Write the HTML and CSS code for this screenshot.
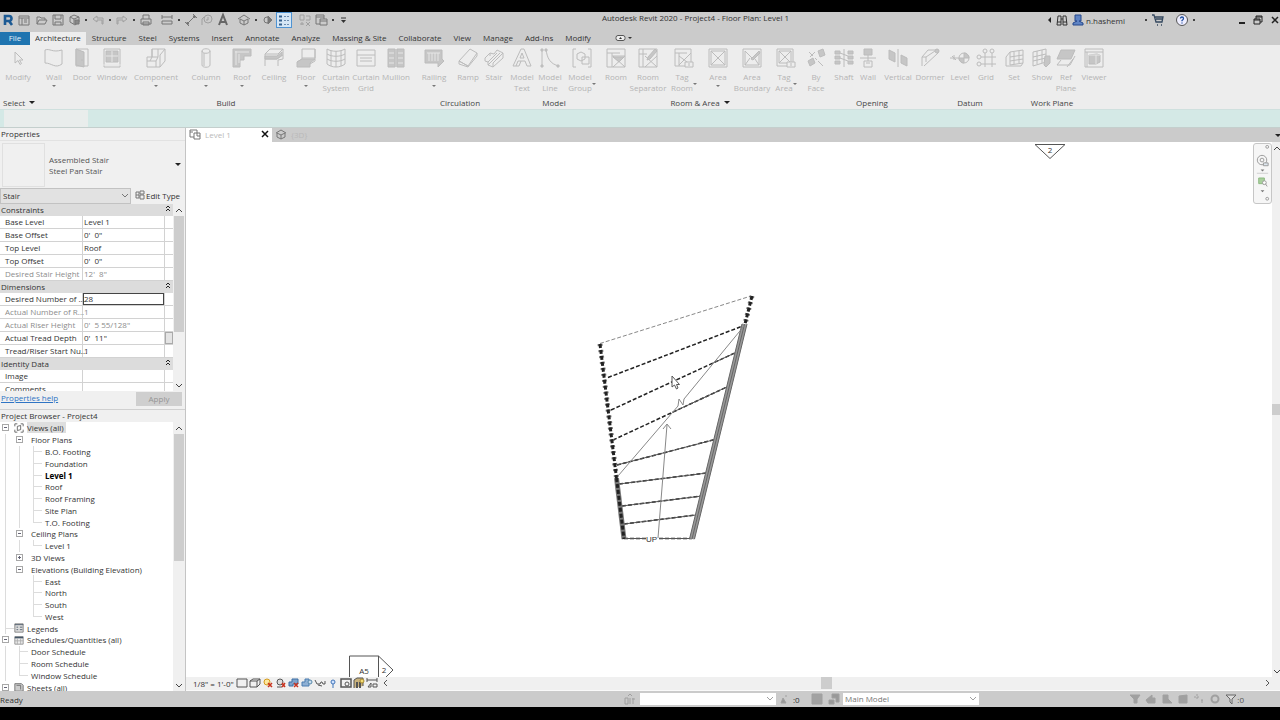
FILE: index.html
```html
<!DOCTYPE html>
<html lang="en">

<head>
  <meta charset="utf-8" />
  <title>Autodesk Revit 2020 - Project4 - Floor Plan: Level 1</title>
  <link rel="stylesheet" href="styles.css">
</head>

<body>
  <header class="titlebar">
    <div class="qat">
      <button class="tool" aria-label="Revit"><svg viewBox="0 0 16 16"><path d="M5 13V4h4a2.400 2.400 0 0 1 0 5H5m4 0 3 4" fill="none" stroke="#1c5a94" stroke-width="2.600"/></svg></button>
      <button class="tool" aria-label="Home"><svg viewBox="0 0 16 16"><path d="M3 4h10v9H3zM3 6h10M6 6v7M8 8h3M8 10h3"/></svg></button>
      <span class="gap-small"></span>
      <button class="tool" aria-label="Open"><svg viewBox="0 0 16 16"><path d="M3 12V5h3l1 1h4v2M3 12l2-4h8l-2 4z"/></svg></button>
      <button class="tool" aria-label="Save"><svg viewBox="0 0 16 16"><path d="M3 3h10v10H3zM5 3v4h6V3M5 13v-3h6v3"/></svg></button>
      <button class="tool" aria-label="Sync"><svg viewBox="0 0 16 16"><path d="M8 3l5 2v5l-4 3-5-3V5zM4 5l4 2 5-2M8 7v5"/><path d="M9 8h4v4H9z" fill="#888"/></svg></button>
      <button class="drop" aria-label="Sync options"></button>
      <button class="tool pale" aria-label="Undo"><svg viewBox="0 0 16 16"><path d="M7 4 3 7l4 3V8h5v4h1V6H7z"/></svg></button>
      <button class="drop" aria-label="Undo list"></button>
      <button class="tool pale" aria-label="Redo"><svg viewBox="0 0 16 16"><path d="M9 4l4 3-4 3V8H4v4H3V6h6z"/></svg></button>
      <button class="drop" aria-label="Redo list"></button>
      <button class="tool" aria-label="Print"><svg viewBox="0 0 16 16"><path d="M5 7V3h6v4M3 7h10v5H3zM5 10h6v3H5z"/></svg></button>
      <span class="gap-large"></span>
      <button class="tool" aria-label="Measure"><svg viewBox="0 0 16 16"><path d="M3 5h10M3 3v4M13 3v4M3 9h10v3H3z"/></svg></button>
      <button class="drop" aria-label="Measure options"></button>
      <button class="tool" aria-label="Aligned dimension"><svg viewBox="0 0 16 16"><path d="M4 12l8-8M2 10l4 4M10 2l4 4"/><path d="M4 10v2h2zM10 4h2v2z" fill="#666"/></svg></button>
      <button class="tool pale" aria-label="Tag"><svg viewBox="0 0 16 16"><path d="M3 13V7l2-2"/><circle cx="9" cy="7" r="4"/><path d="M9 5v3h-2"/></svg></button>
      <button class="tool" aria-label="Text"><svg viewBox="0 0 16 16"><path d="M4 13 8 3l4 10M5.500 10h5" fill="none" stroke="#666" stroke-width="2"/></svg></button>
      <span class="gap-large"></span>
      <button class="tool" aria-label="3D view"><svg viewBox="0 0 16 16"><path d="M2 7l6-4 6 4M4 7v4l4 2 4-2V7M4 7l4 2 4-2M8 9v4"/></svg></button>
      <button class="drop" aria-label="3D view options"></button>
      <button class="tool" aria-label="Section"><svg viewBox="0 0 16 16"><circle cx="7" cy="8" r="3"/><path d="M8 4l4 4-4 4z" fill="#777"/></svg></button>
      <button class="tool active" aria-label="Thin lines"><svg viewBox="0 0 16 16"><path d="M3 4.500h3M3 8.500h3M3 12.500h3" stroke="#345f8c" stroke-width="2"/><path d="M8 4.500h5M8 8.500h5M8 12.500h5" stroke="#6d8cae" stroke-dasharray="2 1"/></svg></button>
      <span class="gap-large"></span>
      <button class="tool pale" aria-label="Close hidden"><svg viewBox="0 0 16 16"><path d="M3 3h4v5H3zM9 4h4v4H9M5 10v3M9 10l4 4M13 10l-4 4M3 12h4"/></svg></button>
      <button class="tool" aria-label="Switch windows"><svg viewBox="0 0 16 16"><path d="M3 3h8v4M3 3v9h4M3 5h8M7 7h7v6H7zM7 9h7"/></svg></button>
      <button class="drop" aria-label="Window list"></button>
      <button class="customize" aria-label="Customize toolbar"><svg viewBox="0 0 12 16"><path d="M4 6h5" stroke="#333"/><path d="M4 8h5l-2.500 3z" fill="#333" stroke="none"/></svg></button>
    </div>
    <h1>Autodesk Revit 2020 - Project4 - Floor Plan: Level 1</h1>
    <div class="info">
      <svg class="tool" viewBox="0 0 16 16"><path d="M13 5v6l-3-3z" fill="#222" stroke="none"/></svg>
      <button class="tool" aria-label="Search"><svg viewBox="0 0 16 16"><path d="M3 13l1-9h3v9zM9 13V4h3l1 9zM7 7h2M3 10h4M9 10h4" stroke="#333"/></svg></button>
      <button class="tool" aria-label="Account"><svg viewBox="0 0 16 16"><path d="M5 3h6v6H9l4 2v2H3v-2l4-2H5z" fill="#5f84c4" stroke="#27498c"/></svg></button>
      <span class="user">n.hashemi</span>
      <button class="drop" aria-label="Account menu"></button>
      <button class="tool" aria-label="App store"><svg viewBox="0 0 16 16"><path d="M2 3h2l2 7h6l1-5H5M6 7h7M7 13h1M11 13h1" stroke="#34485f" stroke-width="1.300"/></svg></button>
      <span class="gap-help"></span>
      <button class="tool" aria-label="Help"><svg viewBox="0 0 16 16"><circle cx="8" cy="8" r="5.500" fill="#eef" stroke="#555"/><path d="M6.500 6.500q0-1.500 1.500-1.500t1.500 1.500q0 1-1.500 2v.8M8 10.500v1" stroke="#1f4fa0" stroke-width="1.300"/></svg></button>
      <button class="drop" aria-label="Help menu"></button>
    </div>
    <div class="window-buttons">
      <button class="tool" aria-label="Minimize"><svg viewBox="0 0 16 16"><path d="M5 11h6" stroke="#222" stroke-width="2"/></svg></button>
      <button class="tool" aria-label="Restore"><svg viewBox="0 0 16 16"><path d="M4 7h6v5H4zM6 7V4h6v6h-2M4 8h6M6 5h6" stroke="#222"/></svg></button>
      <button class="tool" aria-label="Close"><svg viewBox="0 0 16 16"><path d="M6 5l6 6M12 5l-6 6" stroke="#222" stroke-width="1.500"/></svg></button>
    </div>
  </header>

  <nav class="tabs">
    <button class="file">File</button>
    <button class="selected">Architecture</button>
    <button>Structure</button>
    <button>Steel</button>
    <button>Systems</button>
    <button>Insert</button>
    <button>Annotate</button>
    <button>Analyze</button>
    <button>Massing &amp; Site</button>
    <button>Collaborate</button>
    <button>View</button>
    <button>Manage</button>
    <button>Add-Ins</button>
    <button>Modify</button>
    <button class="toggle" aria-label="Minimize ribbon"><svg viewBox="0 0 18 8"><rect x="1" y="1.500" width="9" height="5" rx="2" fill="#eee" stroke="#555"/><path d="M4 5l1.500-2L7 5zM13 3h4l-2 2z" fill="#333"/></svg></button>
  </nav>

  <section class="ribbon">
    <div class="group select-group">
      <div class="buttons">
        <button class="w36"><svg viewBox="0 0 20 20"><path d="M7 4v11l3-2.500 2 4 1.500-1-2-3.500H15z"/></svg><span class="label">Modify</span></button>
      </div>
      <span class="title">Select <i class="caret"></i></span>
    </div>
    <div class="group">
      <div class="buttons">
        <button class="w28"><svg viewBox="0 0 20 20"><path d="M1 2c5-2 7 3 17 0v14c-7 5-10-1-17-1z"/></svg><span class="label">Wall</span><i class="caret"></i></button>
        <button class="w28"><svg viewBox="0 0 20 20"><path d="M4 1h12v17H4z"/><path class="fill" d="M4 1l8 3v15l-8-2z"/><path d="M10 11v2"/></svg><span class="label">Door</span></button>
        <button class="w32"><svg viewBox="0 0 20 20"><path d="M2 1h16v18H2z"/><path class="fill" d="M4 3h12v11H4z"/><path d="M10 3v11M4 8h12M1 17h18" class="light"/></svg><span class="label">Window</span></button>
        <button class="w56"><svg viewBox="0 0 20 20"><path d="M6 1h13v12l-5 6H1V9h5zM6 1v8l-2 4M6 9h6V1M12 9l-2 4v6M19 1l-5 6v12M1 13h9"/></svg><span class="label">Component</span><i class="caret"></i></button>
        <button class="w44"><svg viewBox="0 0 20 20"><path d="M6 3c0-3 8-3 8 0v14c0 3-8 3-8 0zM6 3c0 3 8 3 8 0M8 5v13"/></svg><span class="label">Column</span><i class="caret"></i></button>
        <button class="w28"><svg viewBox="0 0 20 20"><path class="fill" d="M1 1h18v7h-7v4H8v7H1z"/><path class="light" d="M3 4h14M4 3v14M7 6v9"/></svg><span class="label">Roof</span><i class="caret"></i></button>
        <button class="w36"><svg viewBox="0 0 20 20"><path d="M1 6l5-5h13v10l-5 1v6M1 6v12M1 6h13l5-5M1 11h12l6-4"/><path class="fill" d="M1 8h12l5-4v3l-5 4H1z"/></svg><span class="label">Ceiling</span></button>
        <button class="w28"><svg viewBox="0 0 20 20"><path d="M6 1h13v12l-5 3M6 1v10l-5 3M19 1v9H6"/><path class="fill" d="M1 14l5-3h13l-5 4v4H1z"/></svg><span class="label">Floor</span><i class="caret"></i></button>
        <button class="w32"><svg viewBox="0 0 20 20"><path d="M1 1c5 3 13 3 18 0v15c-5 4-13 4-18 0zM5 2v16M10 3v16M15 2v16M1 6c5 3 13 3 18 0M1 11c5 3 13 3 18 0"/></svg><span class="label">Curtain<br>System</span></button>
        <button class="w28"><svg viewBox="0 0 20 20"><path d="M1 2h18v16H1zM1 7h18M4 10h12M4 13h12"/></svg><span class="label">Curtain<br>Grid</span></button>
        <button class="w32"><svg viewBox="0 0 20 20"><path class="fill" d="M2 1h7v18H2zM11 1h7v18h-7z"/><path class="light" d="M3 5h5M3 10h5M3 15h5M12 5h5M12 10h5M12 15h5"/><path d="M10 1v18"/></svg><span class="label">Mullion</span></button>
      </div>
      <span class="title">Build</span>
    </div>
    <div class="group">
      <div class="buttons">
        <button class="w44"><svg viewBox="0 0 20 20"><path class="fill" d="M1 2h17v9l2 2-6 6v-4H1z"/><path class="light" d="M3 5h13M5 5v8M8 5v8M11 5v8M14 5v8"/></svg><span class="label">Railing</span><i class="caret"></i></button>
        <button class="w24"><svg viewBox="0 0 20 20"><path d="M1 13L12 1l7 4-9 13zM1 13v3l9 3 9-11V5M10 18l-9-5"/></svg><span class="label">Ramp</span></button>
        <button class="w28"><svg viewBox="0 0 20 20"><path d="M1 10l5-5 4 1 3-4 6 3v5L9 19l-5-2M1 10v3l3 1 9-9M4 14v3l12-12M9 19v-4l10-10M6 5v3"/></svg><span class="label">Stair</span></button>
      </div>
      <span class="title">Circulation</span>
    </div>
    <div class="group">
      <div class="buttons">
        <button class="w28"><svg viewBox="0 0 20 20"><path d="M1 18L9 1h3l7 17h-4l-2-5H6l-2 5zM8 10h4l-2-5zM4 18h3l2-5"/></svg><span class="label">Model<br>Text</span></button>
        <button class="w28"><svg viewBox="0 0 20 20"><path d="M2 1v18M6 1c1 9 4 15 13 17"/><path class="fill" d="M1 1h2v2H1zM1 17h2v2H1zM5 1h2v2H5zM17 17h2v2h-2z"/></svg><span class="label">Model<br>Line</span></button>
        <button class="w36"><svg viewBox="0 0 20 20"><path d="M4 1H1v18h3M16 1h3v18h-3M5 6l4-2 4 2v5l-4 2-4-2zM10 9h7v7h-7z"/></svg><span class="label-row"><span class="label">Model<br>Group</span><i class="caret"></i></span></button>
      </div>
      <span class="title">Model</span>
    </div>
    <div class="group">
      <div class="buttons">
        <button class="w32"><svg viewBox="0 0 20 20"><path d="M1 1h18v18H1zM1 5h13M6 5v14M6 8h13M7 8l12 11M19 8L7 19"/><path class="fill" d="M7 9h11l-5 5z"/></svg><span class="label">Room</span></button>
        <button class="w32"><svg viewBox="0 0 20 20"><path d="M1 1h18v18H1zM5 1v18M7 8l12 11M19 8L7 19M1 6h8"/><path class="fill" d="M10 9l7-8 2 2-7 8-3 1z"/></svg><span class="label">Room<br>Separator</span></button>
        <button class="w40"><svg viewBox="0 0 20 20"><path d="M1 1h16v17H1zM1 5h12M5 5v13M5 8l12 9M17 5L5 17"/><path class="paper" d="M11 14h8v5h-8z"/><path d="M15 15v3"/></svg><span class="label-row"><span class="label">Tag<br>Room</span><i class="caret"></i></span></button>
        <button class="w28"><svg viewBox="0 0 20 20"><path d="M1 1h18v18H1zM3 3h14v14H3zM3 3l14 14M17 3L3 17"/></svg><span class="label">Area</span><i class="caret"></i></button>
        <button class="w40"><svg viewBox="0 0 20 20"><path d="M1 1h18v18H1zM3 3v14h14V3M3 3l7 7 7-7M3 17l5-7M17 17l-4-6"/><path class="fill" d="M9 11l8-8 1 2-7 7z"/></svg><span class="label">Area<br>Boundary</span></button>
        <button class="w28"><svg viewBox="0 0 20 20"><path d="M1 1h16v17H1zM3 3h12v12H3zM3 3l12 12M15 3L3 15"/><path class="paper" d="M11 14h8v5h-8z"/><path d="M15 15v3"/></svg><span class="label-row"><span class="label">Tag<br>Area</span><i class="caret"></i></span></button>
      </div>
      <span class="title">Room &amp; Area <i class="caret"></i></span>
    </div>
    <div class="group">
      <div class="buttons">
        <button class="w32"><svg viewBox="0 0 20 20"><path class="fill" d="M12 3l5-2 2 6-5 2zM2 13l5-3 2 5-5 3z"/><path d="M3 4l4 4M9 10l2 2M12 13l5 5M4 9L9 4"/></svg><span class="label">By<br>Face</span></button>
        <button class="w24"><svg viewBox="0 0 20 20"><path class="fill" d="M1 3h5v3H1zM1 8h5v3H1zM1 13h5v3H1zM14 3h5v3h-5zM14 8h5v3h-5zM14 13h5v3h-5z"/><path d="M10 1v18M6 5l8 3M6 10l8 3"/></svg><span class="label">Shaft</span></button>
        <button class="w24"><svg viewBox="0 0 20 20"><path class="fill" d="M6 1h8v6H6z"/><path d="M2 10h16M6 13h8v6H6zM8 15h4M10 7v6"/></svg><span class="label">Wall</span></button>
        <button class="w36"><svg viewBox="0 0 20 20"><path class="fill" d="M1 2l6 3v9l-6-3zM13 7l6 3v8l-6-3z"/><path d="M10 1v18"/></svg><span class="label">Vertical</span></button>
        <button class="w28"><svg viewBox="0 0 20 20"><path d="M2 18V9l6-7h10v3L4 18M2 9h4l9-6M6 9v5"/><circle class="fill" cx="17" cy="3" r="2"/></svg><span class="label">Dormer</span></button>
      </div>
      <span class="title">Opening</span>
    </div>
    <div class="group">
      <div class="buttons">
        <button class="w32"><svg viewBox="0 0 20 20"><path d="M0 10h9M4 7v5M2 8l4 4"/><circle cx="14" cy="10" r="5"/><path class="fill" d="M14 10V5a5 5 0 0 1 5 5zM14 10v5a5 5 0 0 1-5-5z"/></svg><span class="label">Level</span></button>
        <button class="w20"><svg viewBox="0 0 20 20"><circle cx="9" cy="3" r="2"/><circle cx="16" cy="3" r="2"/><circle cx="3" cy="9" r="2"/><circle cx="3" cy="16" r="2"/><path d="M9 5v14M16 5v14M5 9h15M5 16h15"/></svg><span class="label">Grid</span></button>
      </div>
      <span class="title">Datum</span>
    </div>
    <div class="group">
      <div class="buttons">
        <button class="w36"><svg viewBox="0 0 20 20"><path d="M6 4l13-2v13L6 17zM6 4l-4 5v9h15l2-3M10 4v12M15 3v12M6 9l13-2M6 13l13-2"/></svg><span class="label">Set</span></button>
        <button class="w20"><svg viewBox="0 0 20 20"><path d="M1 4l13-3v13L1 18zM5 3v13M10 2v13M1 9l13-3M1 13l13-3"/><path class="fill" d="M13 8h5v7l-4 4-2-2z"/></svg><span class="label">Show</span></button>
        <button class="w28"><svg viewBox="0 0 20 20"><path class="fill" d="M5 2h14l-4 9H1z"/><path d="M1 17h13l5-9M5 12l-4 5M17 11l-6 8"/></svg><span class="label">Ref<br>Plane</span></button>
        <button class="w28"><svg viewBox="0 0 20 20"><path d="M1 1h18v18H1zM1 4h18M3 4v15"/><path class="fill" d="M5 7l8-1 3 1v7l-4 2H5z"/><path class="light" d="M5 7h7v9M12 7l4 0"/></svg><span class="label">Viewer</span></button>
      </div>
      <span class="title">Work Plane</span>
    </div>
  </section>

  <div class="options"><div class="options-label"></div></div>

  <main>
    <aside>
      <section class="properties">
        <h2>Properties</h2>
        <button class="type">
          <span class="preview"></span>
          <span>Assembled Stair<br>Steel Pan Stair</span>
          <i class="caret"></i>
        </button>
        <div class="filter">
          <div class="combo">
            <select aria-label="Category">
              <option>Stair</option>
            </select>
            <svg viewBox="0 0 8 8"><path d="M1 2l3 3 3-3"/></svg>
          </div>
          <button class="edit-type"><svg viewBox="0 0 10 10"><path d="M1 2h3v6H1zM5 1h4v3H5zM5 5h4v4H5zM1 5h3"/></svg>Edit Type</button>
        </div>
        <div class="params">
          <div class="table-wrap">
            <table>
              <colgroup>
                <col class="col-name">
                <col>
                <col class="col-assoc">
              </colgroup>
              <tr class="head"><th colspan="3">Constraints<svg viewBox="0 0 6 8"><path d="M1 4l2-2 2 2M1 7l2-2 2 2"/></svg></th></tr>
              <tr><th>Base Level</th><td>Level 1</td><td></td></tr>
              <tr><th>Base Offset</th><td>0'&nbsp; 0"</td><td></td></tr>
              <tr><th>Top Level</th><td>Roof</td><td></td></tr>
              <tr><th>Top Offset</th><td>0'&nbsp; 0"</td><td></td></tr>
              <tr class="off"><th>Desired Stair Height</th><td>12'&nbsp; 8"</td><td></td></tr>
              <tr class="head"><th colspan="3">Dimensions<svg viewBox="0 0 6 8"><path d="M1 4l2-2 2 2M1 7l2-2 2 2"/></svg></th></tr>
              <tr><th><label for="risers">Desired Number of ...</label></th><td class="edit"><input id="risers" type="text" value="28"></td><td></td></tr>
              <tr class="off"><th>Actual Number of R...</th><td>1</td><td></td></tr>
              <tr class="off"><th>Actual Riser Height</th><td>0'&nbsp; 5 55/128"</td><td></td></tr>
              <tr><th>Actual Tread Depth</th><td>0'&nbsp; 11"</td><td class="edit"><button class="assoc" aria-label="Associate parameter"></button></td></tr>
              <tr><th>Tread/Riser Start Nu...</th><td>1</td><td></td></tr>
              <tr class="head"><th colspan="3">Identity Data<svg viewBox="0 0 6 8"><path d="M1 4l2-2 2 2M1 7l2-2 2 2"/></svg></th></tr>
              <tr><th>Image</th><td></td><td></td></tr>
              <tr><th>Comments</th><td></td><td></td></tr>
            </table>
          </div>
          <div class="scroll">
            <svg viewBox="0 0 10 12"><path d="M2 8l3-3 3 3"/></svg>
            <span class="thumb params-thumb"></span>
            <svg class="end" viewBox="0 0 10 12"><path d="M2 5l3 3 3-3"/></svg>
          </div>
        </div>
        <div class="apply-row">
          <a href="#">Properties help</a>
          <button class="apply" disabled>Apply</button>
        </div>
      </section>

      <section class="browser">
        <h2>Project Browser - Project4</h2>
        <div class="tree-wrap">
          <ul class="tree">
            <li><button class="node" aria-label="Collapse"></button><svg class="icon" viewBox="0 0 12 12"><path d="M1 4V1h3M8 1h3v3M11 8v3H8M4 11H1V8M4 4l4-1v5l-4 1z" stroke="#555"/></svg><span class="current">Views (all)</span></li>
            <li><i class="guide"></i><button class="node" aria-label="Collapse"></button><span>Floor Plans</span></li>
            <li><i class="guide"></i><i class="guide"></i><i class="guide tee"></i><span>B.O. Footing</span></li>
            <li><i class="guide"></i><i class="guide"></i><i class="guide tee"></i><span>Foundation</span></li>
            <li><i class="guide"></i><i class="guide"></i><i class="guide tee"></i><b>Level 1</b></li>
            <li><i class="guide"></i><i class="guide"></i><i class="guide tee"></i><span>Roof</span></li>
            <li><i class="guide"></i><i class="guide"></i><i class="guide tee"></i><span>Roof Framing</span></li>
            <li><i class="guide"></i><i class="guide"></i><i class="guide tee"></i><span>Site Plan</span></li>
            <li><i class="guide"></i><i class="guide"></i><i class="guide elbow"></i><span>T.O. Footing</span></li>
            <li><i class="guide"></i><button class="node" aria-label="Collapse"></button><span>Ceiling Plans</span></li>
            <li><i class="guide"></i><i class="guide"></i><i class="guide elbow"></i><span>Level 1</span></li>
            <li><i class="guide"></i><button class="node closed" aria-label="Expand"></button><span>3D Views</span></li>
            <li><i class="guide"></i><button class="node" aria-label="Collapse"></button><span>Elevations (Building Elevation)</span></li>
            <li><i class="guide"></i><i class="blank"></i><i class="guide tee"></i><span>East</span></li>
            <li><i class="guide"></i><i class="blank"></i><i class="guide tee"></i><span>North</span></li>
            <li><i class="guide"></i><i class="blank"></i><i class="guide tee"></i><span>South</span></li>
            <li><i class="guide"></i><i class="blank"></i><i class="guide elbow"></i><span>West</span></li>
            <li><i class="guide tee"></i><svg class="icon" viewBox="0 0 12 12"><path d="M1 1h10v10H1z" fill="#ddd" stroke="#777"/><path d="M1 2h10M3 5h2M3 8h2M7 5h3M7 8h3" stroke="#456"/></svg><span>Legends</span></li>
            <li><button class="node" aria-label="Collapse"></button><svg class="icon" viewBox="0 0 12 12"><path d="M1 2h10v9H1z" fill="#eee" stroke="#888"/><path d="M1 3h10" stroke="#456" stroke-width="2"/><path d="M4 4v7M8 4v7M1 7h10" stroke="#aaa"/></svg><span>Schedules/Quantities (all)</span></li>
            <li><i class="guide"></i><i class="guide tee"></i><span>Door Schedule</span></li>
            <li><i class="guide"></i><i class="guide tee"></i><span>Room Schedule</span></li>
            <li><i class="guide"></i><i class="guide elbow"></i><span>Window Schedule</span></li>
            <li><button class="node" aria-label="Collapse"></button><svg class="icon" viewBox="0 0 12 12"><path d="M1 2h8l2 2v7H1zM3 4h5v5" fill="#ccc" stroke="#666"/></svg><span>Sheets (all)</span></li>
          </ul>
          <div class="scroll">
            <svg viewBox="0 0 10 12"><path d="M2 8l3-3 3 3"/></svg>
            <span class="thumb tree-thumb"></span>
            <svg class="end" viewBox="0 0 10 12"><path d="M2 5l3 3 3-3"/></svg>
          </div>
        </div>
      </section>
    </aside>

    <section class="view">
      <div class="view-tabs">
        <button class="view-tab open"><svg viewBox="0 0 12 12"><path d="M1 2h7v3M1 2v7h4M1 4h3M5 5h6v6H5zM8 5v3h3"/></svg><span>Level 1</span><svg class="close" viewBox="0 0 12 12"><path d="M3 3l6 6M9 3l-6 6"/></svg></button>
        <button class="view-tab"><svg viewBox="0 0 12 12"><path d="M1 5l5-3 5 3M2 5v4l4 2 4-2V5M2 5l4 2 4-2M6 7v4"/></svg><span>{3D}</span></button>
        <i class="caret"></i>
      </div>

      <div class="canvas-row">
        <div class="canvas">
          <svg class="drawing">
            <g transform="translate(-186 -142)">
              <!-- section and elevation marks -->
              <path class="thin" d="M1035 144.500h30l-15 14z"/>
              <text x="1050" y="153" text-anchor="middle">2</text>
              <path class="thin" d="M349.500 680v-24h29v24M378.500 656l14.500 14-10 10"/>
              <text x="364" y="674" text-anchor="middle">A5</text>
              <text x="384" y="673" text-anchor="middle">2</text>

              <!-- risers -->
              <path class="hidden-line" d="M600 343.500L751 296"/>
              <path class="riser" d="M608 377.500L744 325.500M611 410L737 352M613 440L729 386M617 465L715 439.500M619 484L707 473M622 506L702 496M624 524L696 515"/>
              <path class="riser-cut" d="M712 363.500L737 352M672 412.500L729 386M617 465L715 439.500M619 484L707 473M622 506L702 496M624 524L696 515"/>
              <path class="riser" d="M624 538.500h22M659 538.500h33"/>
              <path class="riser-cut" d="M624 538.500h22M659 538.500h33"/>

              <!-- stringers -->
              <path class="bead-edge" d="M600 344L616.500 478M752 296L745 324"/>
              <path class="bead" d="M600 344L616.500 478M752 296L745 324"/>
              <path class="stringer" d="M744.500 324L692 539"/>
              <path class="stringer-edge" d="M742 324L689.500 539M747 324L694.500 539M744.500 324L692 539"/>
              <path class="stringer dark" d="M616.500 478L624 539"/>
              <path class="bead" d="M616.500 478L624 539"/>

              <!-- cut line and path arrow -->
              <path class="thin grey" d="M618 476L678 406l1-7 4 6 1-6L744 326"/>
              <path class="thin grey" d="M658 538L667 425M663 429l4-5 4 5"/>
              <text x="651.500" y="541.500" text-anchor="middle" class="up">UP</text>

              <path class="cursor" d="M672 376v11l2.500-2 2 4 1.500-1-1.500-3.500h3z"/>
            </g>
          </svg>
          <div class="navbar">
            <svg viewBox="0 0 18 62">
              <circle cx="14" cy="3" r="1.500"/>
              <circle cx="8.500" cy="17" r="5"/><circle cx="8.500" cy="17" r="2"/>
              <path d="M10 20h5v3h-5z" fill="#dde6ee"/>
              <path d="M7 27h4l-2 2z" fill="#777" stroke="none"/>
              <path d="M3 31h12" stroke="#ccc"/>
              <path d="M5 36h6v6H5z" fill="#a9cf9d" stroke="#8bb880"/>
              <circle cx="11" cy="41" r="2" fill="#fff"/><path d="M12 42l2 3"/>
              <path d="M7 49h4l-2 2z" fill="#777" stroke="none"/>
              <circle cx="14" cy="58" r="1.500"/>
            </svg>
          </div>
        </div>
        <div class="scroll canvas-scroll">
          <svg viewBox="0 0 10 12"><path d="M2 8l3-3 3 3"/></svg>
          <span class="thumb"></span>
          <svg class="end" viewBox="0 0 10 12"><path d="M2 5l3 3 3-3"/></svg>
        </div>
      </div>

      <div class="view-controls">
        <button class="scale">1/8" = 1'-0"</button>
        <button aria-label="Detail level"><svg viewBox="0 0 12 12"><path d="M1 2h10v8H1z"/></svg></button>
        <button aria-label="Visual style"><svg viewBox="0 0 12 12"><path d="M1 4l3-2h7v5L8 10H1zM1 4h7v6M8 4l3-2"/></svg></button>
        <button aria-label="Sun path"><svg viewBox="0 0 12 12"><circle cx="5" cy="5" r="3" fill="#fbe9a0" stroke="#d69a1c"/><path class="red" d="M6 6l4 4M10 6l-4 4"/></svg></button>
        <button aria-label="Shadows"><svg viewBox="0 0 12 12"><circle cx="5" cy="5" r="3" fill="#ddd"/><path d="M2 10h5"/><path class="red" d="M7 6l3 4M10 6l-3 4"/></svg></button>
        <button aria-label="Crop view"><svg viewBox="0 0 12 12"><path d="M1 9V5h3V2h6v5H5v2z" fill="#7fa3cb" stroke="#3c6ea5"/><path class="red" d="M6 6l4 4M10 6l-4 4"/></svg></button>
        <button aria-label="Show crop region"><svg viewBox="0 0 12 12"><path d="M1 9V5h3V2h4v7z" fill="#8fb0d4" stroke="#4a7cb0"/><circle cx="9" cy="5" r="2" fill="#cde" stroke="#58a"/></svg></button>
        <button aria-label="Hide/isolate"><svg viewBox="0 0 12 12"><path d="M1 3l2 4h3l1-2h1l1 2h2V4M4 8l4 1"/></svg></button>
        <button aria-label="Reveal hidden"><svg viewBox="0 0 12 12"><circle cx="6" cy="5" r="2" fill="#cfe2ff" stroke="#3f74b8"/><path d="M5 8h2M5 10h2" stroke="#3f74b8"/></svg></button>
        <button aria-label="Temporary properties"><svg viewBox="0 0 12 12"><path d="M1 2h10v8H1z" stroke-width="1.500"/><circle cx="7" cy="7" r="2"/></svg></button>
        <button aria-label="Analytical model"><svg viewBox="0 0 12 12"><path d="M1 11V3l3-2h6v8" fill="#c9b27c"/><path d="M4 11V5M7 11V5" stroke-width="2"/><circle cx="9" cy="4" r="2" fill="#f4dc74" stroke="#a88a30"/></svg></button>
        <button aria-label="Constraints"><svg viewBox="0 0 12 12"><path d="M1 3h10M1 1v4M11 1v4M2 10l3-4v4zM7 7h4v3H7z"/></svg></button>
        <button aria-label="Scroll left"><svg viewBox="0 0 12 12"><path d="M8 3L5 6l3 3"/></svg></button>
        <div class="hscroll"><span class="hthumb"></span></div>
        <button aria-label="Scroll right"><svg viewBox="0 0 12 12"><path d="M5 3l3 3-3 3"/></svg></button>
        <span class="grip"></span>
      </div>
    </section>
  </main>

  <footer>
    <div class="status-left">
      <span>Ready</span>
      <svg viewBox="0 0 12 12"><path d="M1 5h3v6H1zM4 3l2-2 2 2M6 5v6M9 5v6M8 6h3"/></svg>
    </div>
    <div class="status-right">
      <div class="combo">
        <select aria-label="Active workset" disabled>
          <option></option>
        </select>
        <svg viewBox="0 0 8 8"><path d="M1 2l3 3 3-3"/></svg>
      </div>
      <svg class="requests" viewBox="0 0 12 12"><path d="M3 10l2-5 3 5zM8 2v2" fill="#999"/></svg>
      <span class="count">:0</span>
      <svg viewBox="0 0 12 12"><path d="M1 1h10v10H1z" fill="#a2a2a2"/></svg>
      <svg class="option-icon" viewBox="0 0 12 12"><path d="M4 1h7v8H8V5H4zM1 7h5v4H1z" fill="#999"/></svg>
      <div class="combo">
        <select aria-label="Design option" disabled>
          <option>Main Model</option>
        </select>
        <svg viewBox="0 0 8 8"><path d="M1 2l3 3 3-3"/></svg>
      </div>
      <div class="filters">
        <svg viewBox="0 0 12 12"><path d="M1 2h10L8 6v4H5V6z" fill="#a0a0a0"/></svg>
        <svg viewBox="0 0 12 12"><path d="M1 7l6-5v3h3v5H3z" fill="#a0a0a0"/></svg>
        <svg viewBox="0 0 12 12"><path d="M2 2h5v4l4 4H2z" fill="#a0a0a0"/></svg>
        <svg viewBox="0 0 12 12"><path d="M2 3l8-1v8H2z" fill="#a0a0a0"/></svg>
        <svg viewBox="0 0 12 12"><path d="M4 1v6M1 4h6M8 8h3M9 6v4" stroke-dasharray="2 1"/></svg>
        <svg viewBox="0 0 12 12"><circle cx="6" cy="6" r="3.500" stroke-width="2"/></svg>
        <div class="filter-count">
          <svg viewBox="0 0 12 12"><path d="M1 2h10L7 6v5L5 9V6z" fill="#ddd" stroke="#666"/></svg>
          <span>:0</span>
        </div>
      </div>
    </div>
  </footer>
</body>

</html>
```

FILE: styles.css
```css
html,
body {
  height: 100%;
  margin: 0;
  overflow: hidden;
  background: #000;
}

body {
  display: flex;
  flex-direction: column;
  box-sizing: border-box;
  padding: 12px 0 13px;
  font: 8px/11px 'Open Sans', 'Noto Sans', sans-serif;
  color: #333;
}

button,
select,
input {
  margin: 0;
  padding: 0;
  border: 0;
  border-radius: 0;
  background: none;
  font: inherit;
  color: inherit;
  white-space: nowrap;
}

h1,
h2 {
  margin: 0;
  font: inherit;
}

svg {
  display: block;
  flex: none;
  fill: none;
  stroke: #777;
}

.caret {
  flex: none;
  border: 2px solid transparent;
  border-top-color: currentColor;
  border-bottom: 0;
}

/* title bar */
.titlebar {
  display: grid;
  grid-template-columns: auto 1fr auto auto;
  flex: none;
  height: 20px;
  background: #cbcbcb;
}

.titlebar h1 {
  padding-left: 4px;
  text-align: center;
  white-space: nowrap;
}

.qat,
.info,
.window-buttons {
  display: flex;
  align-items: center;
  height: 16px;
}

.tool,
.tool svg {
  flex: none;
  width: 16px;
  height: 16px;
}

.tool.pale {
  opacity: 0.5;
}

.tool.active {
  outline: 1px solid #4f93d2;
  outline-offset: -1px;
  background: #d5e6f5;
}

.drop {
  width: 8px;
  height: 16px;
}

.drop::before {
  content: '';
  display: block;
  width: 2px;
  height: 2px;
  margin: 0 auto;
  background: #444;
}

.customize {
  width: 12px;
}

.gap-small {
  width: 2px;
}

.gap-large {
  width: 5px;
}

.gap-help {
  width: 8px;
}

.user {
  width: 56px;
}

.window-buttons {
  padding-left: 36px;
  margin-right: -2px;
}

/* ribbon tabs */
.tabs {
  display: flex;
  flex: none;
  height: 13px;
  background: #cbcbcb;
}

.tabs button {
  padding: 0 6px 2px;
}

.tabs .file {
  width: 30px;
  background: #1f74b0;
  color: #e4f0fa;
}

.tabs .selected {
  padding: 0 5px 2px;
  background: #ededed;
}

.tabs .toggle {
  margin-left: 12px;
}

.toggle svg {
  width: 18px;
  height: 8px;
  stroke: none;
}

/* ribbon */
.ribbon {
  display: flex;
  flex: none;
  height: 64px;
  background: #ededed;
}

.group {
  display: flex;
  flex-direction: column;
  align-items: center;
}

.select-group {
  align-items: flex-start;
  width: 40px;
}

.buttons {
  display: flex;
  flex: 1;
}

.buttons button {
  display: flex;
  flex-direction: column;
  align-items: center;
  padding-top: 3px;
  color: #b4b4b4;
}

.buttons svg {
  width: 20px;
  height: 20px;
  margin-bottom: 3px;
  stroke: #bcbcbc;
}

.buttons .fill {
  fill: #c6c6c6;
}

.buttons .light {
  stroke: #e6e6e6;
}

.buttons .paper {
  fill: #ededed;
}

.buttons .caret {
  margin-top: 3px;
  color: #777;
}

.label-row {
  display: flex;
  align-items: center;
}

.w20 { width: 20px; }
.w24 { width: 24px; }
.w28 { width: 28px; }
.w32 { width: 32px; }
.w36 { width: 36px; }
.w40 { width: 40px; }
.w44 { width: 44px; }
.w56 { width: 56px; }

.title {
  display: flex;
  align-items: center;
  gap: 4px;
  height: 14px;
  color: #444;
}

.title .caret {
  border-width: 3px 3px 0;
  color: #222;
}

.select-group .title {
  padding-left: 3px;
}

.options {
  flex: none;
  height: 17px;
  padding-left: 4px;
  border-top: 1px solid #cfe0de;
  border-bottom: 1px solid #c4cfcd;
  background: #d4e9e6;
}

.options-label {
  width: 84px;
  height: 100%;
  background: #e9edec;
}

/* side panels */
main {
  display: flex;
  flex: 1;
  min-height: 0;
  background: #f0f0f0;
}

aside {
  display: flex;
  flex-direction: column;
  flex: none;
  width: 185px;
  border-right: 1px solid #c4c4c4;
}

h2 {
  height: 12px;
  padding-left: 1px;
  line-height: 12px;
}

.type {
  display: flex;
  align-items: center;
  gap: 4px;
  width: 100%;
  height: 48px;
  padding: 0 4px 0 2px;
  border-top: 1px solid #e2e2e2;
  text-align: left;
  color: #555;
}

.preview {
  width: 41px;
  height: 42px;
  border: 1px solid #e0e0e0;
}

.type .caret,
.view-tabs .caret {
  margin-left: auto;
  border-width: 3px 3px 0;
  color: #222;
}

.filter {
  display: flex;
  gap: 4px;
  height: 16px;
}

.combo {
  position: relative;
}

.combo select {
  appearance: none;
  display: block;
  width: 100%;
  height: 100%;
  padding: 0 2px 1px;
  border: 1px solid #c2c2c2;
  background: #e2e2e2;
}

.combo svg {
  position: absolute;
  top: 50%;
  right: 2px;
  width: 8px;
  height: 8px;
  margin-top: -4px;
  pointer-events: none;
}

.filter .combo {
  width: 131px;
}

.edit-type {
  display: flex;
  align-items: center;
  gap: 1px;
  padding-bottom: 2px;
}

.edit-type svg {
  width: 10px;
  height: 10px;
}

.params {
  display: flex;
  height: 187px;
  background: #fff;
}

.table-wrap {
  flex: 1;
  overflow: hidden;
}

table {
  width: 100%;
  table-layout: fixed;
  border-collapse: separate;
  border-spacing: 0;
}

.col-name {
  width: 83px;
}

.col-assoc {
  width: 8px;
}

th,
td {
  box-sizing: border-box;
  height: 13px;
  padding: 0 0 0 1px;
  border-right: 1px solid #d2d2d2;
  border-bottom: 1px solid #d2d2d2;
  font-weight: normal;
  line-height: 12px;
  text-align: left;
  white-space: nowrap;
}

th {
  padding-left: 5px;
}

td:last-child {
  padding: 0;
  border-right: 0;
}

.head th {
  height: 12px;
  padding-left: 1px;
  border: 0;
  background: #dcdcdc;
}

.head svg {
  float: right;
  width: 6px;
  height: 8px;
  margin-right: 2px;
  stroke: #222;
}

.off {
  color: #8c8c8c;
}

td.edit {
  padding: 0;
}

td input {
  display: block;
  box-sizing: border-box;
  width: 100%;
  height: 12px;
  border: 1px solid #444;
}

.assoc {
  display: block;
  box-sizing: border-box;
  width: 8px;
  height: 12px;
  border: 1px solid #aaa;
  background: #e4e4e4;
}

.scroll {
  display: flex;
  flex-direction: column;
  flex: none;
  width: 10px;
  padding: 0 1px;
  background: #f0f0f0;
}

.scroll svg {
  width: 10px;
  height: 12px;
  stroke: #444;
}

.scroll .end {
  margin-top: auto;
}

.thumb {
  background: #cdcdcd;
}

.params-thumb {
  height: 116px;
}

.tree-thumb {
  height: 127px;
}

.apply-row {
  display: flex;
  justify-content: space-between;
  height: 18px;
  padding: 0 3px 0 1px;
  border-bottom: 1px solid #d0d0d0;
}

.apply-row a {
  padding-top: 1px;
  color: #2f74c4;
}

.apply {
  width: 46px;
  height: 14px;
  margin-top: 1px;
  padding-bottom: 2px;
  background: #cfcfcf;
  color: #949494;
}

.browser {
  display: flex;
  flex-direction: column;
  flex: 1;
  min-height: 0;
}

.tree-wrap {
  display: flex;
  flex: 1;
  min-height: 0;
  background: #fff;
  overflow: hidden;
}

.tree {
  display: grid;
  grid-template-rows: repeat(23, 1fr);
  flex: 1;
  height: 271px;
  margin: 0;
  padding: 0;
  list-style: none;
}

.tree li {
  display: flex;
  align-items: center;
  min-height: 0;
  white-space: nowrap;
}

.tree span,
.tree b {
  margin-left: 3px;
}

.tree b {
  color: #000;
}

.tree .current {
  padding-right: 2px;
  background: #dedede;
}

.tree .icon {
  width: 10px;
  height: 10px;
}

.guide,
.blank {
  box-sizing: border-box;
  align-self: stretch;
  width: 9px;
  margin-left: 5px;
}

.guide {
  border-left: 1px solid #dcdcdc;
}

.tee {
  background: linear-gradient(#dcdcdc, #dcdcdc) 0 50% / 100% 1px no-repeat;
}

.elbow {
  border-left: 0;
  background: linear-gradient(#dcdcdc, #dcdcdc) 0 50% / 100% 1px no-repeat,
    linear-gradient(#dcdcdc, #dcdcdc) 0 0 / 1px 50% no-repeat;
}

.node {
  flex: none;
  box-sizing: border-box;
  width: 7px;
  height: 7px;
  margin: 0 5px 0 2px;
  border: 1px solid #a8a8a8;
  background: linear-gradient(#667, #667) 50% 50% / 3px 1px no-repeat;
}

.node.closed {
  background: linear-gradient(#667, #667) 50% 50% / 3px 1px no-repeat,
    linear-gradient(#667, #667) 50% 50% / 1px 3px no-repeat;
}

/* drawing area */
.view {
  display: flex;
  flex-direction: column;
  flex: 1;
  min-width: 0;
}

.view-tabs {
  display: flex;
  align-items: center;
  flex: none;
  height: 14px;
  background: #cbcbcb;
}

.view-tabs .caret {
  margin-right: -1px;
}

.view-tab {
  display: flex;
  align-items: center;
  gap: 4px;
  box-sizing: border-box;
  height: 14px;
  padding: 0 3px 2px;
  color: #b9b9b9;
}

.view-tab svg {
  width: 12px;
  height: 12px;
}

.view-tab.open {
  width: 86px;
  background: #fff;
}

.view-tab .close {
  margin-left: auto;
  margin-right: -2px;
  stroke: #111;
  stroke-width: 1.5;
}

.canvas-row {
  display: flex;
  flex: 1;
  min-height: 0;
}

.canvas {
  position: relative;
  flex: 1;
  min-width: 0;
  background: #fff;
  overflow: hidden;
}

.drawing {
  width: 100%;
  height: 100%;
}

.drawing text {
  fill: #333;
  stroke: none;
}

.drawing .up {
  font-family: 'Liberation Sans', sans-serif;
}

.thin {
  stroke: #555;
}

.thin.grey {
  stroke: #888;
}

.hidden-line {
  stroke: #888;
  stroke-dasharray: 4 2;
}

.riser {
  stroke: #222;
  stroke-width: 1.5;
  stroke-dasharray: 4 2;
}

.riser-cut {
  stroke: #555;
}

.bead-edge {
  stroke: #777;
  stroke-width: 5;
  stroke-dasharray: 2 4;
}

.bead {
  stroke: #222;
  stroke-width: 3;
  stroke-dasharray: 4 2;
}

.stringer {
  stroke: #999;
  stroke-width: 5;
}

.stringer.dark {
  stroke: #777;
}

.stringer-edge {
  stroke: #666;
}

.cursor {
  fill: #fff;
  stroke: #555;
}

.navbar {
  position: absolute;
  top: 1px;
  right: 0;
  width: 17px;
  border: 1px solid #c6c6c6;
  border-radius: 3px;
  background: #f6f6f6;
}

.navbar svg {
  stroke: #999;
}

.canvas-scroll {
  width: 8px;
  padding: 0;
}

.canvas-scroll .thumb {
  height: 11px;
  margin-top: auto;
}

.view-controls {
  display: flex;
  align-items: center;
  flex: none;
  gap: 1px;
  height: 12px;
  padding: 0 0 1px 7px;
  border-bottom: 1px solid #fafafa;
}

.view-controls svg {
  width: 12px;
  height: 12px;
  stroke: #555;
}

.view-controls .red {
  stroke: #c8321e;
  stroke-width: 1.5;
}

.scale {
  width: 42px;
  text-align: left;
}

.hscroll {
  flex: 1;
  height: 100%;
}

.hthumb {
  display: block;
  width: 11px;
  height: 100%;
  margin: 0 auto;
  background: #cdcdcd;
}

.grip {
  width: 6px;
}

/* status bar */
footer {
  display: grid;
  grid-template-columns: 1fr 1fr;
  flex: none;
  height: 16px;
  background: #cbcbcb;
}

.status-left,
.status-right {
  display: flex;
  align-items: center;
}

.status-left {
  justify-content: space-between;
  padding-right: 4px;
}

footer svg {
  width: 12px;
  height: 12px;
  stroke: #a0a0a0;
}

.status-right .combo {
  width: 136px;
  height: 12px;
}

.status-right select {
  border: 0;
  background: #fff;
  color: #777;
  opacity: 1;
}

.requests {
  margin: 0 3px 0 2px;
}

.count {
  width: 18px;
}

.option-icon {
  margin: 0 3px 0 5px;
}

.filters {
  display: flex;
  align-items: center;
  gap: 4px;
  margin-left: auto;
  padding-right: 36px;
  color: #555;
}

.filter-count {
  display: flex;
  align-items: center;
}
```
